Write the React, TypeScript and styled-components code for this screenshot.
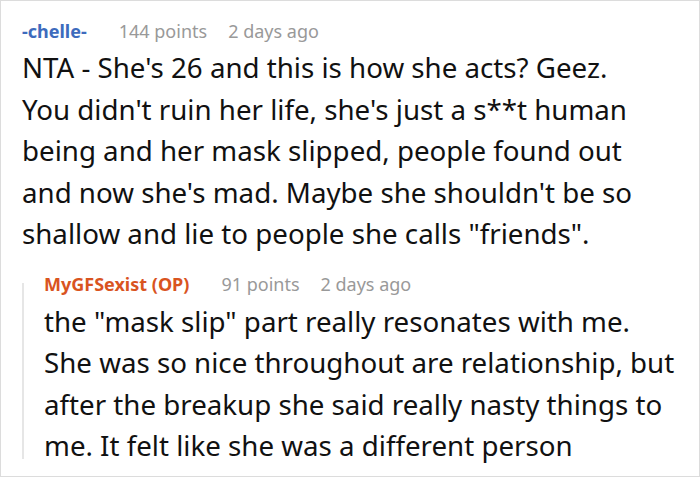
import React from 'react';
import styled, { createGlobalStyle } from 'styled-components';

const GlobalStyle = createGlobalStyle`
  body {
    margin: 0;
    background: #fff;
    font-family: 'Noto Sans', 'Open Sans', sans-serif;
  }
`;

interface CommentData {
  author: string;
  points: number;
  age: string;
  text: string;
  isOp?: boolean;
}

const comment: CommentData = {
  author: '-chelle-',
  points: 144,
  age: '2 days ago',
  text: 'NTA - She\'s 26 and this is how she acts? Geez. You didn\'t ruin her life, she\'s just a s**t human being and her mask slipped, people found out and now she\'s mad. Maybe she shouldn\'t be so shallow and lie to people she calls "friends".'
};

const reply: CommentData = {
  author: 'MyGFSexist (OP)',
  points: 91,
  age: '2 days ago',
  text: 'the "mask slip" part really resonates with me. She was so nice throughout are relationship, but after the breakup she said really nasty things to me. It felt like she was a different person',
  isOp: true
};

const App: React.FC = () => {
  return (
    <>
      <GlobalStyle />
      <Card>
        <Header>
          <Author isOp={false}>{comment.author}</Author>
          <Points>{comment.points} points</Points>
          <Age>{comment.age}</Age>
        </Header>
        <Body>{comment.text}</Body>
        <Reply>
          <Header>
            <Author isOp={reply.isOp}>{reply.author}</Author>
            <Points>{reply.points} points</Points>
            <Age>{reply.age}</Age>
          </Header>
          <ReplyBody>{reply.text}</ReplyBody>
        </Reply>
      </Card>
    </>
  );
};

const Card = styled.div`
  box-sizing: border-box;
  width: 700px;
  height: 477px;
  overflow: hidden;
  border: 1px solid #dcdcdc;
  padding: 16px 19px 0 21px;
`;

const Header = styled.div`
  display: flex;
  align-items: center;
  font-size: 18px;
  line-height: 28px;
`;

const Author = styled.span<{ isOp?: boolean }>`
  font-weight: 700;
  color: ${props => (props.isOp ? '#d9541f' : '#3d6bbd')};
  margin-right: 32px;
`;

const Points = styled.span`
  color: #999;
  margin-right: 21px;
`;

const Age = styled.span`
  color: #999;
`;

const Body = styled.div`
  margin-top: 2px;
  margin-right: 30px;
  font-size: 27.7px;
  line-height: 1.5;
  color: #111;
`;

const Reply = styled.div`
  position: relative;
  margin-top: 15px;
  padding-left: 22px;

  &::before {
    content: '';
    position: absolute;
    left: 0;
    top: 13px;
    bottom: 8px;
    width: 2px;
    background: #e6e6e6;
  }
`;

const ReplyBody = styled(Body)`
  margin-top: 3px;
  margin-right: 0;
`;

export default App;
